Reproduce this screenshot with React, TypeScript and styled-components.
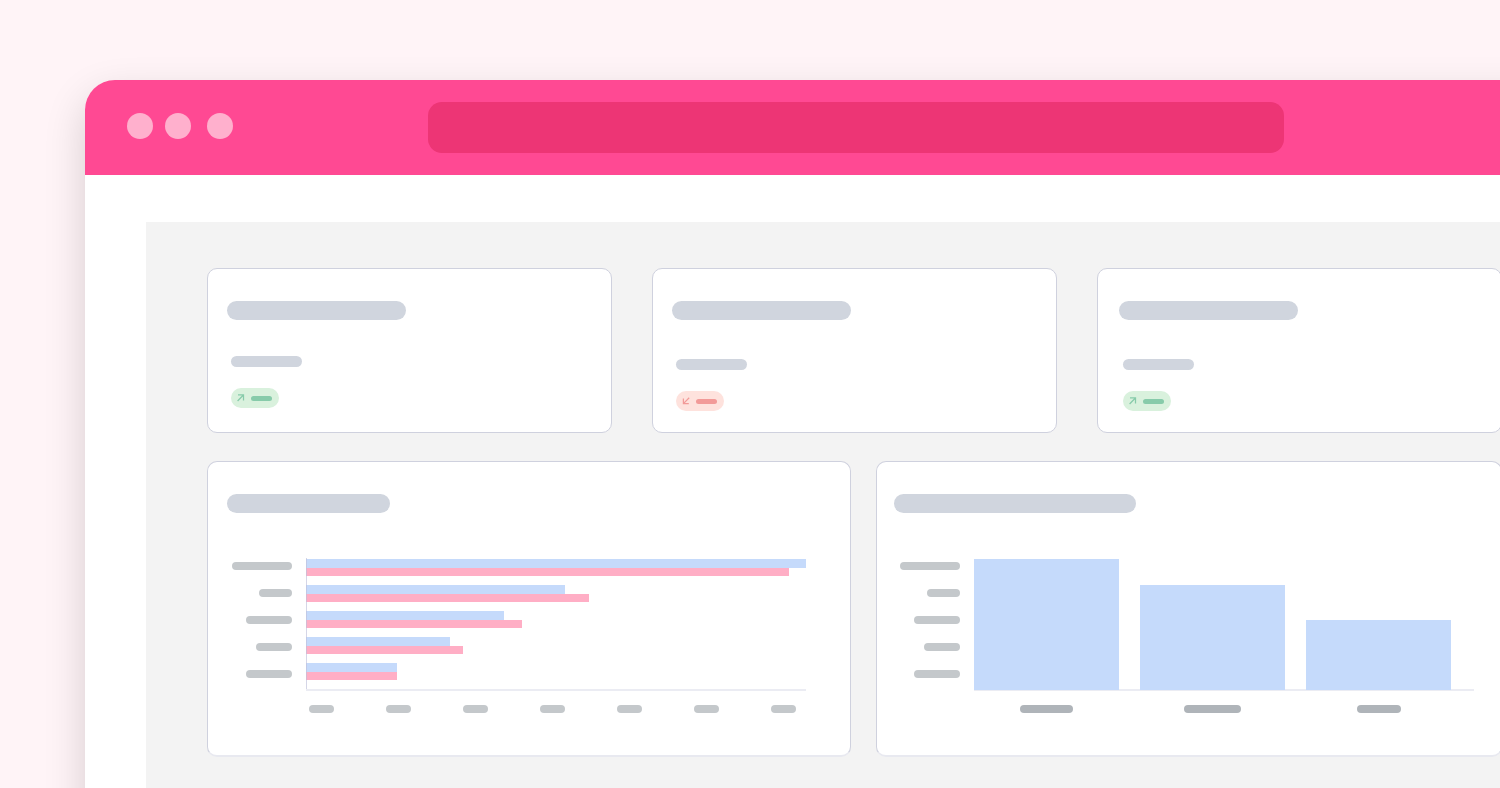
import React from "react";
import styled, { createGlobalStyle } from "styled-components";

const color = {
  page: "#fff4f7",
  brand: "#ff4993",
  brandDark: "#ed3575",
  brandLight: "#ffb0cd",
  panel: "#f3f3f3",
  line: "#cfd1de",
  lineSoft: "#e8e9f0",
  block: "#d0d5de",
  label: "#c4c8cb",
  labelDark: "#afb4b9",
  blue: "#c5dafb",
  pink: "#ffaec5",
};

const tones = {
  up: { background: "#d9f1dd", ink: "#87cbaa" },
  down: { background: "#fee2dd", ink: "#f29a98" },
};

type Tone = keyof typeof tones;

const GlobalStyle = createGlobalStyle`
  *, *::before, *::after { box-sizing: border-box; }
  body { margin: 0; background: ${color.page}; font-family: "Inter", sans-serif; }
`;

/* The browser window runs off the right and bottom edges of the page. */
const Page = styled.div`
  display: flex;
  flex-direction: column;
  min-height: 100vh;
  padding: 80px 0 0 85px;
  overflow: hidden;
  background: ${color.page};
`;

const BrowserWindow = styled.div`
  flex: 1;
  display: flex;
  flex-direction: column;
  margin: 0 -60px -60px 0;
  border-radius: 30px 0 0 0;
  background: #fff;
  box-shadow: 0 16px 42px rgba(0, 0, 0, 0.16);
`;

const TitleBar = styled.header`
  display: flex;
  align-items: flex-start;
  gap: 195px;
  height: 95px;
  padding: 22px 276px 0 42px;
  border-radius: 30px 0 0 0;
  background: ${color.brand};
`;

const WindowControls = styled.div`
  display: flex;
  flex: none;
  padding-top: 11px;
`;

const ControlDot = styled.span`
  width: 26px;
  height: 26px;
  border-radius: 50%;
  background: ${color.brandLight};

  & + & {
    margin-left: 12px;
  }

  & + & + & {
    margin-left: 16px;
  }
`;

const AddressBar = styled.input`
  flex: 1;
  min-width: 0;
  height: 51px;
  padding: 0 20px;
  border: 0;
  border-radius: 14px;
  outline: none;
  background: ${color.brandDark};
  color: #fff;
  font: inherit;
`;

const Viewport = styled.main`
  flex: 1;
  display: flex;
  padding: 47px 0 0 61px;
`;

const Dashboard = styled.div`
  flex: 1;
  display: flex;
  flex-direction: column;
  gap: 28px;
  padding: 46px 58px 91px 61px;
  background: ${color.panel};
`;

const StatRow = styled.section`
  display: grid;
  grid-template-columns: repeat(3, 1fr);
  gap: 40px;
`;

const ChartRow = styled.section`
  display: grid;
  grid-template-columns: 644fr 626fr;
  gap: 25px;
`;

const Card = styled.article<{ $inset: number }>`
  padding: 32px 20px 0 ${(p) => p.$inset}px;
  border: 1px solid ${color.line};
  border-radius: 10px;
  background: #fff;
`;

const StatCard = styled(Card)`
  height: 165px;
`;

const ChartCard = styled(Card)<{ $end: number }>`
  padding-right: ${(p) => p.$end}px;
  padding-bottom: 42px;
  border-bottom: 2px solid ${color.lineSoft};
`;

const Pill = styled.div<{ $width: number; $height: number; $color: string }>`
  flex: none;
  width: ${(p) => p.$width}px;
  height: ${(p) => p.$height}px;
  border-radius: ${(p) => p.$height}px;
  background: ${(p) => p.$color};
`;

const StatBody = styled.div<{ $top: number }>`
  display: flex;
  flex-direction: column;
  align-items: flex-start;
  gap: 21px;
  margin: ${(p) => p.$top}px 0 0 4px;
`;

const Badge = styled.div<{ $tone: Tone }>`
  display: flex;
  align-items: center;
  gap: 6px;
  width: 48px;
  height: 20px;
  padding-left: 6px;
  border-radius: 10px;
  background: ${(p) => tones[p.$tone].background};
  color: ${(p) => tones[p.$tone].ink};
`;

const Chart = styled.div<{ $indent: number }>`
  display: flex;
  gap: 14px;
  margin: 45px 0 0 ${(p) => p.$indent}px;
`;

const YLabels = styled.div`
  flex: none;
  display: flex;
  flex-direction: column;
  align-items: flex-end;
  gap: 19px;
  width: 60px;
  padding-top: 4px;
`;

const PlotColumn = styled.div`
  flex: 1;
`;

const Plot = styled.div`
  position: relative;
  height: 133px;
  padding-top: 1px;
  border-bottom: 2px solid #ebecf3;
`;

const BarGroups = styled(Plot)`
  display: flex;
  flex-direction: column;
  gap: 9px;

  &::after {
    content: "";
    position: absolute;
    inset: 0 auto 0 0;
    width: 1px;
    background: rgba(190, 192, 218, 0.65);
  }
`;

const Bar = styled.div<{ $color: string; $height: number }>`
  height: ${(p) => p.$height}px;
  background: ${(p) => p.$color};
`;

const Columns = styled(Plot)`
  display: grid;
  grid-template-columns: repeat(3, 1fr);
  align-items: end;
  gap: 21px;
  padding-right: 23px;
`;

/* Each column stands on the axis and covers its upper pixel row. */
const Column = styled.div`
  margin-bottom: -1px;
  background: ${color.blue};
`;

const Ticks = styled.div`
  display: flex;
  justify-content: space-between;
  padding: 14px 10px 0 3px;
`;

const ColumnLabels = styled.div`
  display: grid;
  grid-template-columns: repeat(3, 1fr);
  justify-items: center;
  gap: 21px;
  padding: 14px 23px 0 0;
`;

const stats: { tone: Tone; inset: number; top: number }[] = [
  { tone: "up", inset: 19, top: 36 },
  { tone: "down", inset: 19, top: 39 },
  { tone: "up", inset: 21, top: 39 },
];

const yLabelWidths = [60, 33, 46, 36, 46];

const groups = [
  [100, 96.6],
  [51.8, 56.6],
  [39.6, 43.2],
  [28.8, 31.4],
  [18.2, 18.2],
];

const columns = [
  { value: 131, label: 53 },
  { value: 105, label: 57 },
  { value: 70, label: 44 },
];

function TrendArrow({ tone }: { tone: Tone }) {
  return (
    <svg
      width="8"
      height="8"
      viewBox="0 0 8 8"
      fill="none"
      stroke="currentColor"
      strokeWidth="1.25"
      aria-hidden="true"
    >
      {tone === "up" ? (
        <path d="M0.6 7L6.4 1M1 0.9H6.5V6.4" />
      ) : (
        <path d="M7.2 0.8L1.4 6.6M1.4 1.4V6.7H6.8" />
      )}
    </svg>
  );
}

function YAxis() {
  return (
    <YLabels>
      {yLabelWidths.map((width, i) => (
        <Pill key={i} $width={width} $height={8} $color={color.label} />
      ))}
    </YLabels>
  );
}

export default function App() {
  return (
    <>
      <GlobalStyle />
      <Page>
        <BrowserWindow>
          <TitleBar>
            <WindowControls>
              <ControlDot />
              <ControlDot />
              <ControlDot />
            </WindowControls>
            <AddressBar type="text" aria-label="Address" />
          </TitleBar>
          <Viewport>
            <Dashboard>
              <StatRow>
                {stats.map((stat, i) => (
                  <StatCard key={i} $inset={stat.inset}>
                    <Pill $width={179} $height={19} $color={color.block} />
                    <StatBody $top={stat.top}>
                      <Pill $width={71} $height={11} $color={color.block} />
                      <Badge $tone={stat.tone}>
                        <TrendArrow tone={stat.tone} />
                        <Pill $width={21} $height={5} $color="currentColor" />
                      </Badge>
                    </StatBody>
                  </StatCard>
                ))}
              </StatRow>
              <ChartRow>
                <ChartCard $inset={19} $end={44}>
                  <Pill $width={163} $height={19} $color={color.block} />
                  <Chart $indent={5}>
                    <YAxis />
                    <PlotColumn>
                      <BarGroups>
                        {groups.map(([current, previous], i) => (
                          <div key={i}>
                            <Bar $color={color.blue} $height={9} style={{ width: `${current}%` }} />
                            <Bar $color={color.pink} $height={8} style={{ width: `${previous}%` }} />
                          </div>
                        ))}
                      </BarGroups>
                      <Ticks>
                        {Array.from({ length: 7 }, (_, i) => (
                          <Pill key={i} $width={25} $height={8} $color={color.label} />
                        ))}
                      </Ticks>
                    </PlotColumn>
                  </Chart>
                </ChartCard>
                <ChartCard $inset={17} $end={27}>
                  <Pill $width={242} $height={19} $color={color.block} />
                  <Chart $indent={6}>
                    <YAxis />
                    <PlotColumn>
                      <Columns>
                        {columns.map((column, i) => (
                          <Column key={i} style={{ height: column.value }} />
                        ))}
                      </Columns>
                      <ColumnLabels>
                        {columns.map((column, i) => (
                          <Pill key={i} $width={column.label} $height={8} $color={color.labelDark} />
                        ))}
                      </ColumnLabels>
                    </PlotColumn>
                  </Chart>
                </ChartCard>
              </ChartRow>
            </Dashboard>
          </Viewport>
        </BrowserWindow>
      </Page>
    </>
  );
}
